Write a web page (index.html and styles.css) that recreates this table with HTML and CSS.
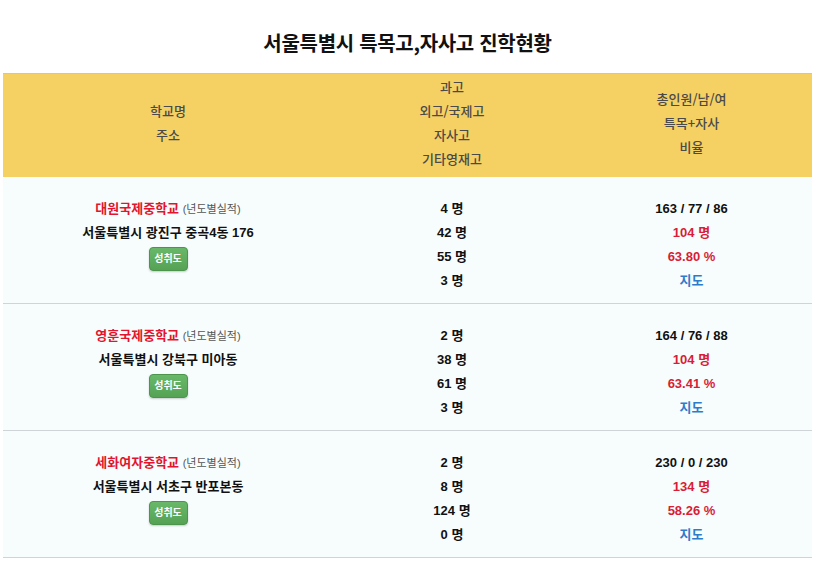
FILE: index.html
```html
<!DOCTYPE html>
<html lang="ko">
<head>
<meta charset="utf-8">
<title>서울특별시 특목고,자사고 진학현황</title>
<link rel="stylesheet" href="styles.css">
</head>
<body>
<h1 class="title">서울특별시 특목고,자사고 진학현황</h1>
<table class="tbl">
  <colgroup><col class="c1"><col class="c2"><col class="c3"></colgroup>
  <thead>
    <tr>
      <th>학교명<br>주소</th>
      <th>과고<br>외고/국제고<br>자사고<br>기타영재고</th>
      <th>총인원/남/여<br>특목+자사<br>비율</th>
    </tr>
  </thead>
  <tbody>
    <tr>
      <td><div class="line"><span class="name">대원국제중학교</span> <span class="sub">(년도별실적)</span></div><div class="line">서울특별시 광진구 중곡4동 176</div><div class="line"><span class="btn">성취도</span></div><div class="line"></div></td>
      <td><div class="line">4 명</div><div class="line">42 명</div><div class="line">55 명</div><div class="line">3 명</div></td>
      <td><div class="line">163 / 77 / 86</div><div class="line red">104 명</div><div class="line red">63.80 %</div><div class="line blue">지도</div></td>
    </tr>
    <tr>
      <td><div class="line"><span class="name">영훈국제중학교</span> <span class="sub">(년도별실적)</span></div><div class="line">서울특별시 강북구 미아동</div><div class="line"><span class="btn">성취도</span></div><div class="line"></div></td>
      <td><div class="line">2 명</div><div class="line">38 명</div><div class="line">61 명</div><div class="line">3 명</div></td>
      <td><div class="line">164 / 76 / 88</div><div class="line red">104 명</div><div class="line red">63.41 %</div><div class="line blue">지도</div></td>
    </tr>
    <tr>
      <td><div class="line"><span class="name">세화여자중학교</span> <span class="sub">(년도별실적)</span></div><div class="line">서울특별시 서초구 반포본동</div><div class="line"><span class="btn">성취도</span></div><div class="line"></div></td>
      <td><div class="line">2 명</div><div class="line">8 명</div><div class="line">124 명</div><div class="line">0 명</div></td>
      <td><div class="line">230 / 0 / 230</div><div class="line red">134 명</div><div class="line red">58.26 %</div><div class="line blue">지도</div></td>
    </tr>
  </tbody>
</table>
</body>
</html>
```
FILE: styles.css
```css
html, body {
  margin: 0;
  padding: 0;
  background: #fff;
}
body {
  font-family: "Liberation Sans", "Noto Sans CJK KR", Arial, sans-serif;
  color: #111;
}
.title {
  margin: 0;
  padding: 30px 0 17px;
  font-size: 20px;
  line-height: 26px;
  font-weight: bold;
  text-align: center;
  color: #111;
  font-family: "Noto Sans CJK KR", sans-serif;
  letter-spacing: -0.3px;
}
.tbl {
  width: 809px;
  margin: 0 3px;
  border-collapse: collapse;
  table-layout: fixed;
}
.c1 { width: 330px; }
.c2 { width: 238px; }
.c3 { width: 241px; }
.tbl th {
  background: #f5d063;
  color: #4a4a4a;
  font-weight: 500;
  font-size: 13px;
  line-height: 24px;
  padding: 1px 0 6px;
  vertical-align: middle;
  text-align: center;
  font-family: "Noto Sans CJK KR", sans-serif;
  border-top: 1px solid #e8c866;
}
.tbl td {
  background: #f7fdfd;
  padding: 20px 0 10px;
  border-bottom: 1px solid #cfd4d6;
  text-align: center;
  vertical-align: top;
  font-size: 13px;
  font-weight: bold;
}
.line {
  height: 24px;
  line-height: 24px;
}
.name {
  color: #e3152e;
}
.sub {
  font-size: 11px;
  font-weight: normal;
  color: #555;
}
.red {
  color: #d91d36;
}
.blue {
  color: #2c7ccc;
}
.btn {
  display: inline-block;
  margin-top: 2px;
  width: 37px;
  height: 22px;
  line-height: 22px;
  font-size: 10px;
  color: #fff;
  background: linear-gradient(#69b869, #55a255);
  border: 1px solid #4d944d;
  border-radius: 4px;
  box-shadow: 0 1px 2px rgba(0,0,0,0.2);
  vertical-align: top;
}
```
